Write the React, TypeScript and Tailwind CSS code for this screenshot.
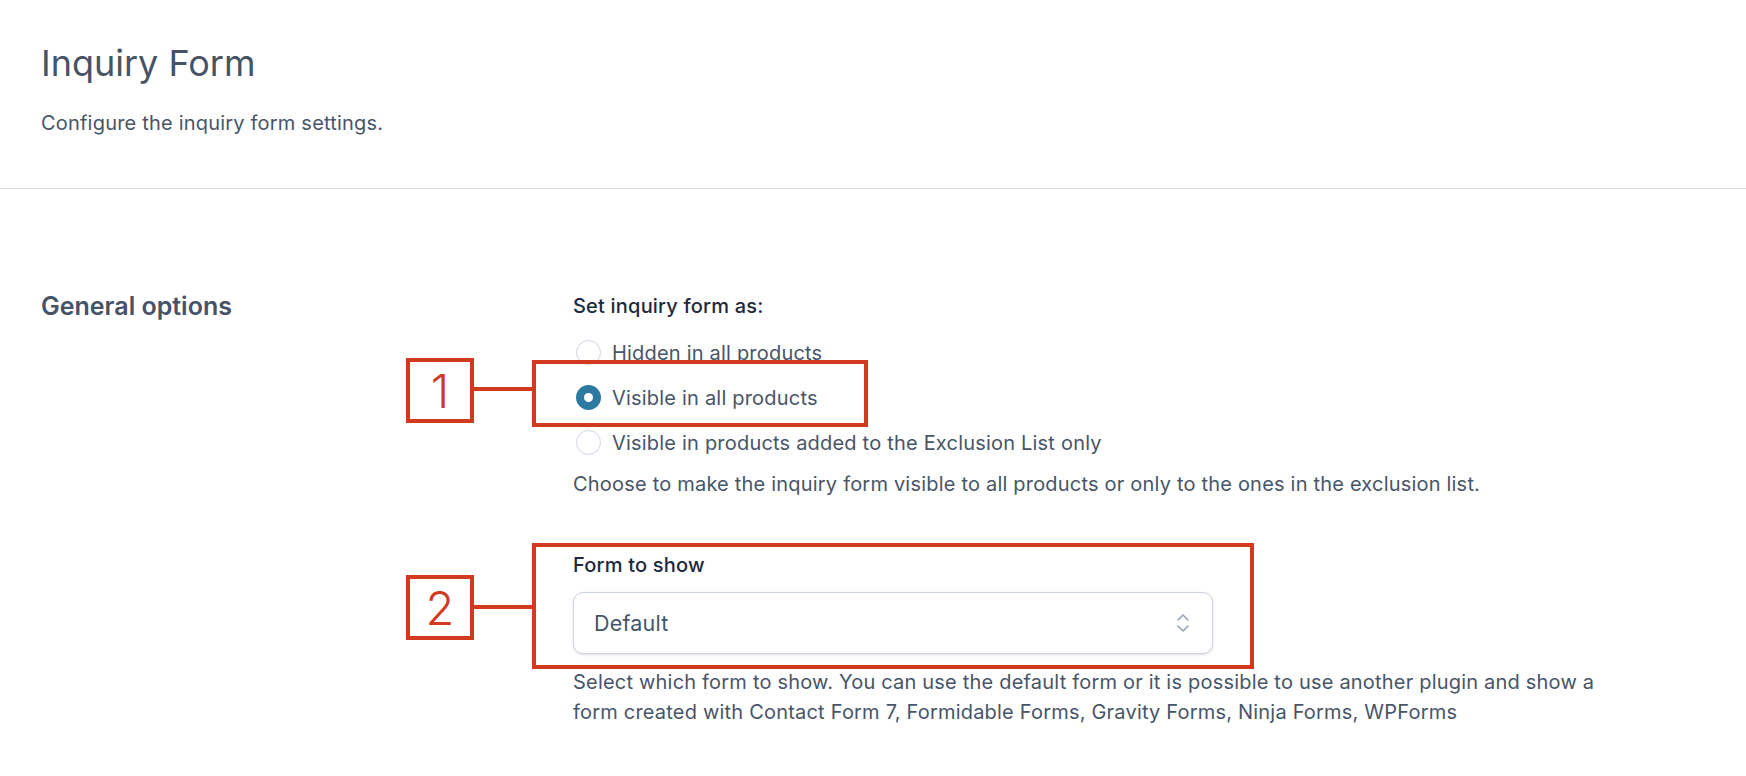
import { useState } from "react";

const options = [
  { id: "hidden", label: "Hidden in all products" },
  { id: "visible", label: "Visible in all products" },
  { id: "exclusion", label: "Visible in products added to the Exclusion List only" },
];

function Radio({ checked }: { checked: boolean }) {
  if (checked) {
    return (
      <span className="flex h-[25px] w-[25px] shrink-0 items-center justify-center rounded-full bg-[#2c7aa1]">
        <span className="h-[9px] w-[9px] rounded-full bg-white" />
      </span>
    );
  }
  return <span className="h-[25px] w-[25px] shrink-0 rounded-full border border-[#cfd6e2] bg-white" />;
}

function Annotation({ n, className }: { n: string; className: string }) {
  return (
    <div
      className={`absolute flex h-[65px] w-[68px] items-center justify-center border-[4px] border-[#d13a1c] bg-white text-[47px] font-light leading-none text-[#d13a1c] ${className}`}
    >
      {n}
    </div>
  );
}

export default function App() {
  const [choice, setChoice] = useState("visible");

  return (
    <div className="relative min-h-screen bg-white font-['Inter','Noto_Sans',sans-serif] text-[#475569]">
      {/* Header */}
      <header className="px-[41px] pt-[41px] pb-[51px]">
        <h1 className="text-[36px] leading-[44px] font-normal text-[#465366]">Inquiry Form</h1>
        <p className="mt-[24px] text-[20px] leading-[28px] tracking-[0.2px]">Configure the inquiry form settings.</p>
      </header>
      <div className="h-px bg-[#d5dae3]" />

      {/* General options */}
      <section className="flex px-[41px] pt-[101px]">
        <h2 className="w-[532px] shrink-0 text-[25px] leading-[32px] font-semibold text-[#465366]">
          General options
        </h2>

        <div className="mt-[2px] flex-1 text-[20px] tracking-[0.2px]">
          <div className="leading-[28px] font-medium text-[#1e293b]">Set inquiry form as:</div>
          <div className="mt-[10px] flex flex-col">
            {options.map((o) => (
              <label
                key={o.id}
                className="flex h-[45px] cursor-pointer items-center gap-[11px] pl-[3px]"
                onClick={() => setChoice(o.id)}
              >
                <Radio checked={choice === o.id} />
                <span>{o.label}</span>
              </label>
            ))}
          </div>
          <p className="mt-[5px] leading-[28px]">
            Choose to make the inquiry form visible to all products or only to the ones in the exclusion list.
          </p>

          <div className="mt-[53px] leading-[28px] font-medium text-[#1e293b]">Form to show</div>
          <div className="mt-[13px] flex h-[62px] w-[640px] items-center justify-between rounded-[10px] border border-[#cdd5e1] bg-white pr-[22px] pl-[20px] shadow-sm">
            <span className="text-[21.5px]">Default</span>
            <svg width="14" height="20" viewBox="0 0 14 20" fill="none" stroke="#97a3b6" strokeWidth="1.6" strokeLinecap="round" strokeLinejoin="round">
              <path d="M2 7l5-5 5 5" />
              <path d="M2 13l5 5 5-5" />
            </svg>
          </div>
          <p className="mt-[13px] max-w-[1045px] leading-[30px]">
            Select which form to show. You can use the default form or it is possible to use another plugin and show a
            form created with Contact Form 7, Formidable Forms, Gravity Forms, Ninja Forms, WPForms
          </p>
        </div>
      </section>

      {/* Annotations */}
      <div className="absolute top-[360px] left-[532px] h-[67px] w-[336px] border-[4px] border-[#d13a1c]" />
      <div className="absolute top-[387px] left-[474px] h-[4px] w-[58px] bg-[#d13a1c]" />
      <Annotation n="1" className="top-[358px] left-[406px]" />

      <div className="absolute top-[543px] left-[532px] h-[126px] w-[722px] border-[4px] border-[#d13a1c]" />
      <div className="absolute top-[605px] left-[474px] h-[4px] w-[58px] bg-[#d13a1c]" />
      <Annotation n="2" className="top-[575px] left-[406px]" />
    </div>
  );
}
